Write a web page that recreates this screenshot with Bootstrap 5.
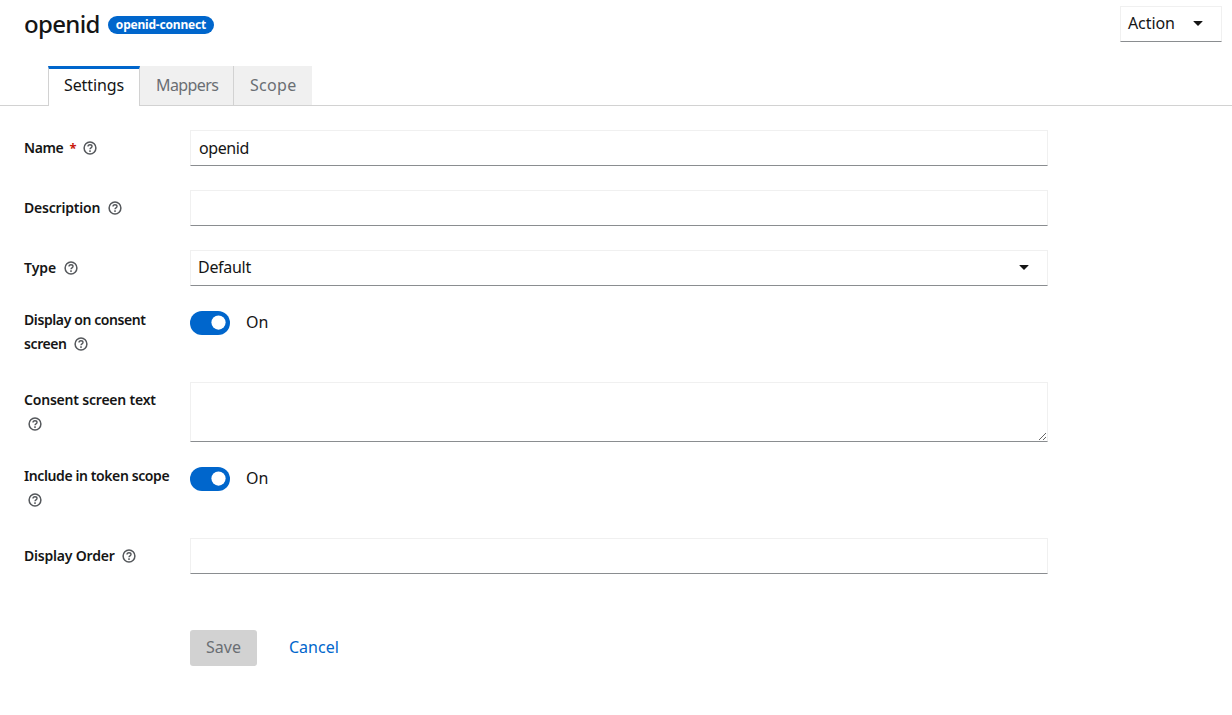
<!doctype html>
<html lang="en">
<head>
<meta charset="utf-8">
<title>openid</title>
<link href="https://cdn.jsdelivr.net/npm/bootstrap@5.3.0/dist/css/bootstrap.min.css" rel="stylesheet">
<style>
body{font-family:"Noto Sans","Liberation Sans",sans-serif;color:#151515;font-size:16px;background:#fff;}
.page-head{padding:6px 10px 0 24px;height:66px;}
.page-title{font-size:24px;line-height:36px;font-weight:500;margin:0;letter-spacing:-.65px;}
.scope-pill{background:#06c;color:#fff;font-size:12px;font-weight:700;letter-spacing:-.2px;border-radius:30px;height:18px;line-height:18px;padding:0 8px;margin:2px 0 0 8px;}
.act-btn{width:102px;height:36px;border:1px solid #f0f0f0;border-bottom-color:#8a8d90;border-radius:0;background:#fff;padding:0 18px 2px 7px;color:#151515;font-size:16px;letter-spacing:-.1px;}
.caret{width:0;height:0;border-left:5px solid transparent;border-right:5px solid transparent;border-top:5px solid #151515;border-radius:1px;}
.tab-strip{padding-left:48px;border-bottom:1px solid #d2d2d2;height:40px;flex-wrap:nowrap;}
.tab-strip .nav-link{height:39px;line-height:24px;padding:7px 0 8px 16px;border:0;border-right:1px solid #d2d2d2;border-radius:0;margin:0;background:#f0f0f0;color:#6a6e73;font-size:16px;}
.tab-strip .nav-item:last-child .nav-link{border-right:0;}
.tab-strip .nav-link.active{height:40px;width:92px;background:#fff;color:#151515;border-top:3px solid #06c;border-left:1px solid #d2d2d2;border-right:1px solid #d2d2d2;padding:4px 0 8px 15px;letter-spacing:-.1px;}
.tab-strip .nav-link.tab-map{width:94px;letter-spacing:-.6px;}
.tab-strip .nav-link.tab-scope{width:78px;letter-spacing:.3px;}
.form-area{width:1048px;padding:24px 0 0 24px;}
.form-line{display:grid;grid-template-columns:166px 858px;margin-bottom:24px;}
.form-line.sw-line{min-height:48px;}
.lbl{font-size:14px;font-weight:600;letter-spacing:-.2px;line-height:24px;padding:6px 16px 0 0;margin:0;}
.lbl-tight{letter-spacing:-.4px;}
.lbl-plain{letter-spacing:0;}
.sw-line .lbl{padding-top:0;margin-top:-2px;}
.req{color:#c9190b;font-weight:700;font-size:13px;margin:0 3px 0 3px;}
.help{width:14px;height:14px;margin-left:4px;vertical-align:-2px;}
.fld{height:36px;border:1px solid #f0f0f0;border-bottom-color:#8a8d90;border-radius:0;padding:5px 8px;font-size:16px;color:#151515;box-shadow:none;letter-spacing:-.4px;}
.fld-select{padding:4px 8px 6px 7px;--bs-form-select-bg-img:none;background-image:none;letter-spacing:-.3px;}
.sel-wrap{position:relative;}
.sel-caret{position:absolute;right:19px;top:15px;}
textarea.fld{height:60px;min-height:60px;}
.tgl.form-check{padding:0;margin:0;min-height:24px;height:24px;gap:16px;}
.tgl .form-check-input,.tgl .form-check-input:checked{float:none;margin:1px 0 0 0;width:40px;height:24px;border:0;border-radius:12px;background-color:#06c;background-size:18.67px;background-position:right 2.67px center;box-shadow:none;opacity:1;}
.tgl .form-check-label{opacity:1;color:#151515;font-size:16px;line-height:24px;}
.btn-row{margin-top:56px;padding-left:166px;gap:16px;}
.save-btn,.save-btn:disabled{height:36px;width:67px;padding:0 0 2px;background:#d2d2d2;border:0;color:#6a6e73;font-size:16px;border-radius:3px;opacity:1;}
.cancel-lnk{color:#06c;padding:0 16px;line-height:35px;text-decoration:none;font-size:16px;}
</style>
</head>
<body>
<header class="page-head d-flex justify-content-between align-items-start">
  <div class="d-flex align-items-center">
    <h1 class="page-title">openid</h1>
    <span class="scope-pill">openid-connect</span>
  </div>
  <button class="act-btn d-flex align-items-center justify-content-between" type="button">Action <span class="caret"></span></button>
</header>
<ul class="nav nav-tabs tab-strip">
  <li class="nav-item"><a class="nav-link active" href="#">Settings</a></li>
  <li class="nav-item"><a class="nav-link tab-map" href="#">Mappers</a></li>
  <li class="nav-item"><a class="nav-link tab-scope" href="#">Scope</a></li>
</ul>
<svg width="0" height="0" class="d-block position-absolute"><defs>
<symbol id="q" viewBox="0 0 14 14"><circle cx="7" cy="7" r="5.9" fill="none" stroke="#55585c" stroke-width="1.5"/><path d="M5 5.6c0-1.2.9-1.9 2-1.9s2 .7 2 1.7c0 1.5-2 1.5-2 2.9" fill="none" stroke="#55585c" stroke-width="1.4"/><rect x="6.2" y="9.3" width="1.6" height="1.6" fill="#55585c"/></symbol>
</defs></svg>
<form class="form-area">
  <div class="form-line">
    <label class="lbl lbl-tight">Name <span class="req">*</span><svg class="help"><use href="#q"/></svg></label>
    <input class="form-control fld" value="openid">
  </div>
  <div class="form-line">
    <label class="lbl">Description <svg class="help"><use href="#q"/></svg></label>
    <input class="form-control fld">
  </div>
  <div class="form-line">
    <label class="lbl lbl-plain">Type <svg class="help"><use href="#q"/></svg></label>
    <div class="sel-wrap">
      <select class="form-select fld fld-select"><option>Default</option></select>
      <span class="caret sel-caret"></span>
    </div>
  </div>
  <div class="form-line sw-line">
    <label class="lbl lbl-tight">Display on consent screen <svg class="help"><use href="#q"/></svg></label>
    <div class="form-check form-switch tgl d-flex align-items-center">
      <input class="form-check-input" type="checkbox" role="switch" checked id="s1">
      <label class="form-check-label" for="s1">On</label>
    </div>
  </div>
  <div class="form-line">
    <label class="lbl">Consent screen text <svg class="help"><use href="#q"/></svg></label>
    <textarea class="form-control fld"></textarea>
  </div>
  <div class="form-line sw-line">
    <label class="lbl lbl-tight">Include in token scope <svg class="help"><use href="#q"/></svg></label>
    <div class="form-check form-switch tgl d-flex align-items-center">
      <input class="form-check-input" type="checkbox" role="switch" checked id="s2">
      <label class="form-check-label" for="s2">On</label>
    </div>
  </div>
  <div class="form-line">
    <label class="lbl">Display Order <svg class="help"><use href="#q"/></svg></label>
    <input class="form-control fld">
  </div>
  <div class="btn-row d-flex">
    <button class="btn save-btn" type="button" disabled>Save</button>
    <a class="cancel-lnk" href="#">Cancel</a>
  </div>
</form>
<script src="https://cdn.jsdelivr.net/npm/bootstrap@5.3.0/dist/js/bootstrap.bundle.min.js"></script>
</body>
</html>
